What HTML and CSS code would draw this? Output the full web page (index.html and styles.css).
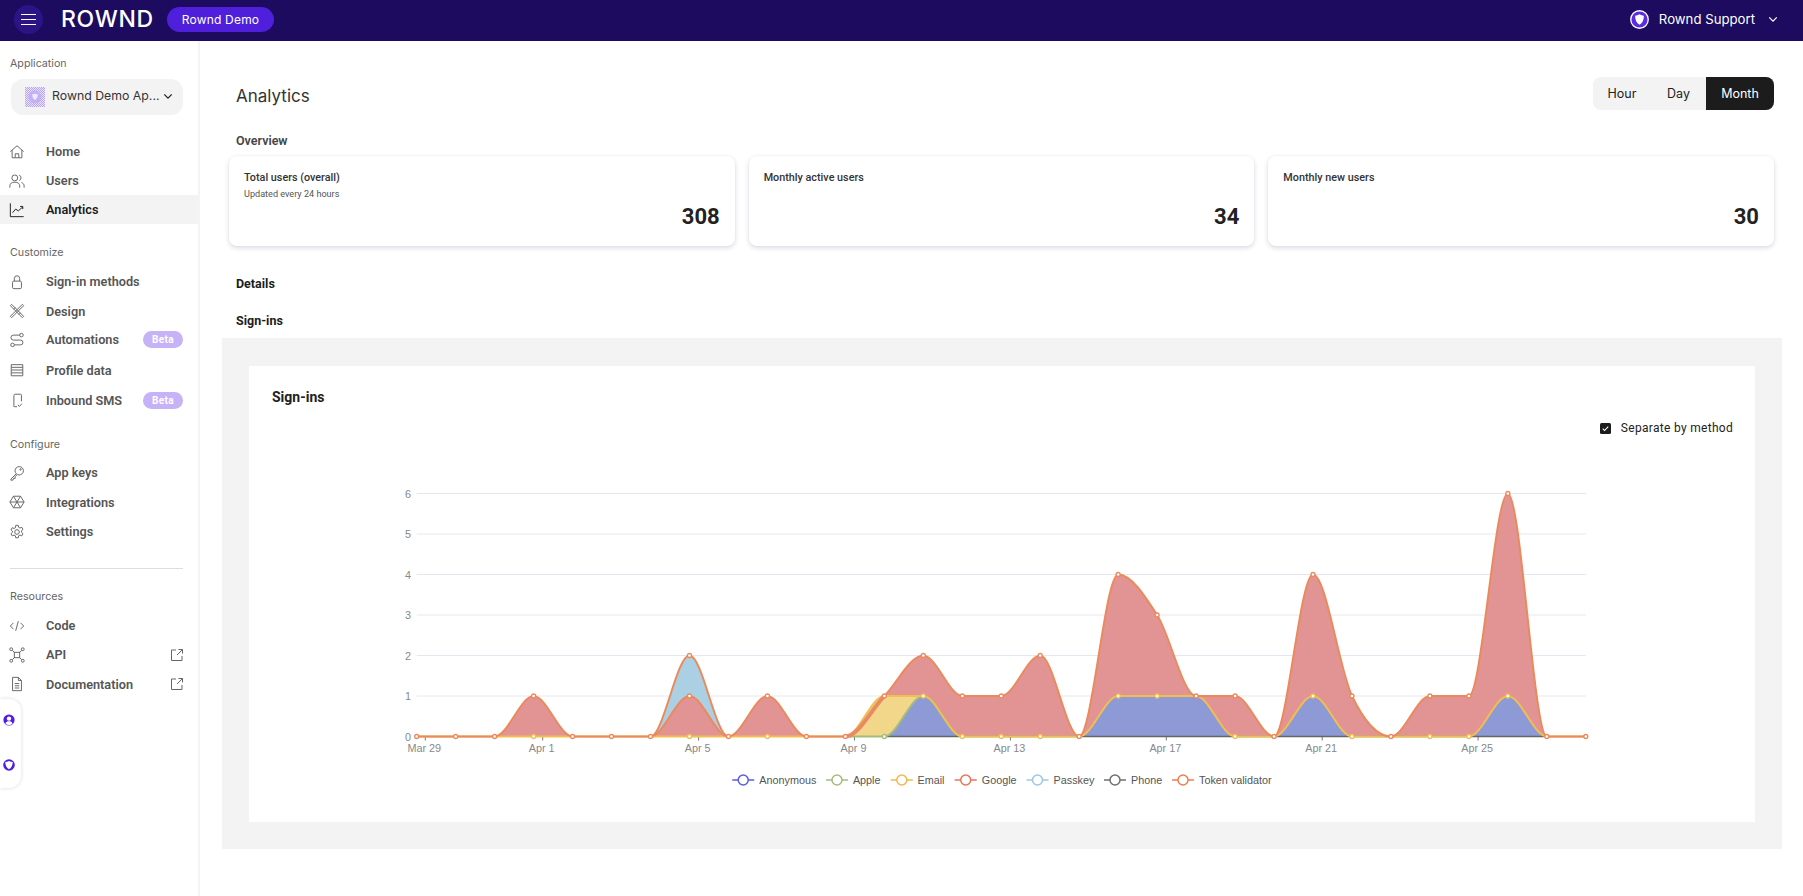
FILE: index.html
```html
<!DOCTYPE html>
<html lang="en">
<head>
<meta charset="utf-8">
<title>Rownd Analytics</title>
<link rel="stylesheet" href="styles.css">
</head>
<body>
<header class="topbar">
  <button class="menu-btn" aria-label="Menu"><span></span><span></span><span></span></button>
  <div class="logo">ROWND</div>
  <div class="env-pill">Rownd Demo</div>
  <div class="account">
    <svg class="account-icon" viewBox="0 0 20 20"><circle cx="10" cy="10" r="9.2" fill="#5a2be0" stroke="#fff" stroke-width="1.4"/><path d="M10 4.600c1.600 1 3 1.400 4.600 1.400 0 4.400-1.400 7.600-4.600 9.600-3.200-2-4.600-5.200-4.600-9.600 1.600 0 3-.4 4.600-1.400z" fill="#fff"/></svg>
    <span>Rownd Support</span>
    <svg class="chev chev-light" viewBox="0 0 12 8"><path d="M1.500 1.500 6 6l4.500-4.500"/></svg>
  </div>
</header>
<div class="shell">
  <aside class="sidebar">
    <div class="nav-label first">Application</div>
    <div class="app-select">
      <svg class="app-icon" viewBox="0 0 20 20">
        <defs><pattern id="px" width="2" height="2" patternUnits="userSpaceOnUse"><rect width="2" height="2" fill="#e9e2fc"/><rect width="1" height="1" fill="#bba6f5"/><rect x="1" y="1" width="1" height="1" fill="#bba6f5"/></pattern></defs>
        <rect width="20" height="20" fill="url(#px)"/><circle cx="10" cy="10" r="6.500" fill="#c3b0f6"/><path d="M10 6.400c.9.600 1.800.8 2.800.8 0 2.600-.9 4.600-2.800 5.800-1.900-1.200-2.800-3.200-2.800-5.800 1 0 1.900-.2 2.800-.8z" fill="#efeafd"/>
      </svg>
      <span class="app-name">Rownd Demo Ap...</span>
      <svg class="chev" viewBox="0 0 12 8"><path d="M1.500 1.500 6 6l4.500-4.500"/></svg>
    </div>
    <nav class="nav-group top">
      <a class="nav-row"><svg class="ico" viewBox="0 0 18 18"><path d="M1.500 8.500 9 2l7.500 6.500M3.500 7v8.500h11V7M7 15.500v-4.500h4v4.500"/></svg><span>Home</span></a>
      <a class="nav-row"><svg class="ico" viewBox="0 0 18 18"><circle cx="6.500" cy="5.500" r="3.300"/><path d="M1 16.500v-2c0-2.500 2-4.200 5.500-4.200s5.500 1.700 5.500 4.200v2M11.500 2.500a3.200 3.200 0 0 1 0 6M14 10.800c2 .6 3 1.900 3 3.700v2"/></svg><span>Users</span></a>
      <a class="nav-row active"><svg class="ico ico-dark" viewBox="0 0 18 18"><path d="M1.500 1.500v15h15M4 12l3.500-4 3 2 5-4.500M12.500 5h3v3"/></svg><span>Analytics</span></a>
    </nav>
    <div class="nav-label">Customize</div>
    <nav class="nav-group">
      <a class="nav-row"><svg class="ico" viewBox="0 0 18 18"><rect x="4" y="8" width="10" height="8.500" rx="1.500"/><path d="M6 8V5a3 3 0 0 1 6 0v3"/></svg><span>Sign-in methods</span></a>
      <a class="nav-row tall"><svg class="ico" viewBox="0 0 18 18"><path d="M3 1.500 16.500 15l-1.500 1.500L1.500 3zM15 1.500 16.500 3 3 16.500 1.500 15zM5 7 7 5M11 13l2-2"/></svg><span>Design</span></a>
      <a class="nav-row short"><svg class="ico" viewBox="0 0 18 18"><circle cx="14" cy="3.500" r="2"/><circle cx="4" cy="14.500" r="2"/><path d="M12 3.500H5a2.800 2.800 0 0 0 0 5.600h8a2.700 2.700 0 0 1 0 5.400H6"/></svg><span>Automations</span><em class="badge">Beta</em></a>
      <a class="nav-row tall"><svg class="ico" viewBox="0 0 18 18"><path d="M2.500 3h13v12.500h-13zM2.500 6h13M2.500 9h13M2.500 12.200h13"/></svg><span>Profile data</span></a>
      <a class="nav-row tall"><svg class="ico" viewBox="0 0 18 18"><path d="M5.500 15.500V4c0-1 .6-1.500 1.500-1.500h6c.7 0 1 .4 1 1v7M5 15.500c0 .5.300 1 1 1h3M10 14.500l1.700 1.700 2.800-3"/></svg><span>Inbound SMS</span><em class="badge">Beta</em></a>
    </nav>
    <div class="nav-label configure">Configure</div>
    <nav class="nav-group">
      <a class="nav-row"><svg class="ico" viewBox="0 0 18 18"><circle cx="11.500" cy="6.500" r="4.700"/><path d="M8 10 2 16v1h2.500l.5-2h2v-2l2-2"/><circle cx="13" cy="5" r=".8"/></svg><span>App keys</span></a>
      <a class="nav-row tall"><svg class="ico" viewBox="0 0 18 18"><path d="M5 2.500h8L17 9l-4 6.500H5L1 9zM1 9h16M5 2.500l8 13M13 2.500l-8 13"/></svg><span>Integrations</span></a>
      <a class="nav-row"><svg class="ico" viewBox="0 0 18 18"><circle cx="9" cy="9" r="2.600"/><path d="M7.600 1.500h2.800l.4 2.200 1.500.8 2.100-.8 1.400 2.400-1.700 1.500v1.800l1.700 1.500-1.400 2.400-2.100-.8-1.500.8-.4 2.200H7.600l-.4-2.200-1.500-.8-2.100.8-1.400-2.400 1.700-1.500V8.100L2.200 6.600l1.400-2.400 2.100.8 1.500-.8z"/></svg><span>Settings</span></a>
    </nav>
    <hr class="nav-divider">
    <div class="nav-label compact">Resources</div>
    <nav class="nav-group">
      <a class="nav-row"><svg class="ico" viewBox="0 0 18 18"><path d="M5 5.500 1.500 9 5 12.500M13 5.500 16.500 9 13 12.500M10.500 3.500l-3 11"/></svg><span>Code</span></a>
      <a class="nav-row"><svg class="ico" viewBox="0 0 18 18"><rect x="6" y="6" width="6" height="6"/><circle cx="2.500" cy="2.500" r="1.600"/><circle cx="15.500" cy="2.500" r="1.600"/><circle cx="2.500" cy="15.500" r="1.600"/><circle cx="15.500" cy="15.500" r="1.600"/><path d="M3.700 3.700 6 6M14.300 3.700 12 6M3.700 14.300 6 12M14.300 14.300 12 12"/></svg><span>API</span><svg class="ext" viewBox="0 0 12 12"><path d="M5 1H.5v10.500H11V7M6 6l5.500-5.500M7.500.5h4v4"/></svg></a>
      <a class="nav-row tall"><svg class="ico" viewBox="0 0 18 18"><path d="M4 1.500h6.500l3.500 3.500v11.500H4zM10.500 1.500V5H14M6.500 8.500h5M6.500 11h5M6.500 13.500h5"/></svg><span>Documentation</span><svg class="ext" viewBox="0 0 12 12"><path d="M5 1H.5v10.500H11V7M6 6l5.500-5.500M7.500.5h4v4"/></svg></a>
    </nav>
  </aside>
  <main class="main">
    <div class="page-head">
      <h1>Analytics</h1>
      <div class="segmented"><span>Hour</span><span class="day">Day</span><span class="on">Month</span></div>
    </div>
    <h2 class="overview">Overview</h2>
    <section class="stats">
      <article class="stat"><div class="stat-title">Total users (overall)</div><div class="stat-sub">Updated every 24 hours</div><div class="stat-num">308</div></article>
      <article class="stat"><div class="stat-title">Monthly active users</div><div class="stat-sub">&nbsp;</div><div class="stat-num">34</div></article>
      <article class="stat"><div class="stat-title">Monthly new users</div><div class="stat-sub">&nbsp;</div><div class="stat-num">30</div></article>
    </section>
    <h2 class="details">Details</h2>
    <h2 class="signins">Sign-ins</h2>
    <section class="panel">
      <div class="chart-card">
        <h3>Sign-ins</h3>
        <label class="check"><span class="box"><svg viewBox="0 0 12 12"><path d="M3 6.200 5 8.200 9 4"/></svg></span>Separate by method</label>
        <svg id="chart" class="chart" viewBox="249 470 1506 330"></svg>
      </div>
    </section>
  </main>
</div>
<aside class="float-widget">
  <svg viewBox="0 0 12 12"><circle cx="6" cy="6" r="5.600" fill="#4f1fdb"/><circle cx="6" cy="4.600" r="2.200" fill="#fff"/><path d="M2.400 9.400c.6-1.600 2-2.200 3.600-2.200s3 .6 3.600 2.200A5 5 0 0 1 6 11a5 5 0 0 1-3.600-1.600z" fill="#fff"/></svg>
  <svg viewBox="0 0 12 12"><circle cx="6" cy="6" r="5.800" fill="#4f1fdb"/><path d="M6 1.900c1.200.7 2.400 1 3.700 1 0 3.400-1.100 5.700-3.700 7.300-2.600-1.600-3.700-3.900-3.700-7.300 1.300 0 2.500-.3 3.700-1z" fill="#fff"/></svg>
</aside>
<script src="chart.js"></script>
</body>
</html>
```
FILE: styles.css
```css
* { box-sizing: border-box; }
html, body { margin: 0; height: 100%; overflow: hidden; background: #fff; }
body { font-family: Roboto, "Liberation Sans", sans-serif; color: #1c1c1c; }

.topbar { height: 41px; background: #1c0b5e; display: flex; align-items: center; padding-left: 14px; color: #fff; }
.menu-btn { width: 29px; height: 29px; border: 0; border-radius: 50%; background: #2d1485; display: flex; flex-direction: column; align-items: center; justify-content: center; gap: 4px; padding: 0; margin-top: -3px; }
.menu-btn span { display: block; width: 15px; height: 1px; background: #fff; }
.logo { font-family: Inter, sans-serif; font-size: 23px; font-weight: 500; letter-spacing: .7px; margin-left: 18px; margin-top: -3px; width: 106px; }
.env-pill { width: 107px; height: 25px; border-radius: 13px; background: #4f1fdb; display: flex; align-items: center; justify-content: center; font-family: Inter, sans-serif; font-size: 12px; letter-spacing: .2px; margin-top: -3px; }
.account { margin-left: auto; display: flex; align-items: center; font-family: Inter, sans-serif; font-size: 13.200px; margin-top: -3px; padding-right: 25px; }
.account-icon { width: 19px; height: 19px; margin-right: 10px; }
.chev { width: 10px; height: 7px; fill: none; stroke: #222; stroke-width: 1.500; }
.chev-light { stroke: #fff; margin-left: 13px; }

.shell { display: flex; height: 855px; }
.sidebar { width: 200px; flex: none; border-right: 2px solid #f4f4f4; }
.nav-label { font-family: Inter, sans-serif; font-size: 10.700px; color: #666; padding-left: 10px; height: 15px; line-height: 15px; margin-bottom: 7px; margin-top: 21px; }
.nav-label.first { margin-top: 15px; margin-bottom: 8px; }
.nav-label.configure { margin-top: 22px; margin-bottom: 6px; }
.nav-label.compact { margin-top: 20px; }
.app-select { margin: 8px 15px 0 11px; height: 36px; border-radius: 12px; background: #f3f3f3; display: flex; align-items: center; padding: 0 10px 0 14px; }
.app-icon { width: 20px; height: 20px; flex: none; }
.app-name { font-family: Inter, sans-serif; font-size: 12.300px; margin: 0 0 3px 7px; white-space: nowrap; flex: 1; color: #333; }
.app-select .chev { margin-bottom: 1px; }
.nav-group { display: flex; flex-direction: column; }
.nav-group.top { margin-top: 22px; }
.nav-row { height: 29px; display: flex; align-items: center; padding: 0 15px 0 9px; font-size: 12.700px; font-weight: 600; color: #555; }
.nav-row.tall { height: 30px; }
.nav-row.short { height: 27px; margin-bottom: 2px; }
.nav-row > span { margin-left: 21px; flex: 1; }
.nav-row.active { background: #f3f3f3; color: #1c1c1c; }
.ico { width: 16px; height: 16px; flex: none; fill: none; stroke: #666; stroke-width: 1.100; }
.ico-dark { stroke: #222; }
.ext { width: 12px; height: 12px; fill: none; stroke: #666; stroke-width: 1; }
.badge { width: 40px; height: 17px; line-height: 17px; border-radius: 9px; background: #c6b2f7; color: #fff; font-style: normal; text-align: center; font-size: 10px; font-weight: 700; letter-spacing: .4px; }
.nav-divider { border: 0; border-top: 1px solid #ddd; margin: 22px 15px 0 10px; }

.main { flex: 1; min-width: 0; padding: 36px 21px 0 22px; }
.page-head { display: flex; justify-content: space-between; align-items: center; padding: 0 8px 0 14px; height: 33px; }
h1 { margin: 0; padding-top: 4px; font-family: Inter, sans-serif; font-size: 17px; font-weight: 400; color: #333; }
.segmented { display: flex; width: 181px; height: 33px; border-radius: 8px; background: #f3f3f3; overflow: hidden; font-family: Inter, sans-serif; font-size: 12.500px; color: #222; }
.segmented span { display: flex; align-items: center; justify-content: center; width: 58px; }
.segmented .day { width: 55px; }
.segmented .on { width: 68px; background: #1c1c1c; color: #fff; }
h2 { margin: 0; padding-left: 14px; font-size: 12.500px; font-weight: 700; line-height: 16px; }
.overview { color: #444; margin-top: 23px; font-weight: 600; }
.details { margin-top: 30px; }
.signins { margin-top: 21px; }
.stats { display: grid; grid-template-columns: repeat(3, 1fr); gap: 14px; margin: 7px 8px 0 7px; }
.stat { height: 90px; border-radius: 8px; background: #fff; box-shadow: 0 2px 5px rgba(40, 40, 80, .16), 0 0 2px rgba(40, 40, 80, .05); padding: 15px 15px; }
.stat-title { font-size: 10.800px; font-weight: 500; color: #333; line-height: 14px; }
.stat-sub { font-size: 9.100px; color: #555; line-height: 12px; margin-top: 3px; }
.stat-num { text-align: right; font-size: 22px; font-weight: 700; line-height: 26px; margin-top: 4px; color: #222; }
.panel { margin-top: 9px; background: #f3f3f3; height: 511px; padding: 28px 27px; }
.chart-card { background: #fff; height: 456px; padding: 22px 22px 0 23px; display: flex; flex-direction: column; }
h3 { margin: 0; font-size: 14px; font-weight: 700; line-height: 18px; color: #222; }
.check { align-self: flex-end; display: flex; align-items: center; font-size: 12px; letter-spacing: .3px; color: #222; margin-top: 13px; height: 18px; }
.box { width: 11px; height: 11px; border-radius: 1.500px; background: #1c1c1c; margin-right: 10px; display: flex; }
.box svg { width: 11px; height: 11px; fill: none; stroke: #fff; stroke-width: 1.200; }
.chart { width: 1506px; height: 330px; margin: 33px 0 0 -23px; flex: none; font-family: "Liberation Sans", Arial, sans-serif; font-size: 10.800px; }
.chart text { fill: #888; }
.chart .legend-text { fill: #555; }
.grid-line { stroke: #e6e6f0; stroke-width: 1; }
.base-line { stroke: #666; stroke-width: 1.500; }
.tick { stroke: #777; stroke-width: 1; }

.float-widget { position: absolute; left: 0; top: 699px; width: 21px; height: 89px; background: #fff; border-radius: 0 12px 12px 0; box-shadow: 0 0 4px rgba(0, 0, 0, .14); display: flex; flex-direction: column; align-items: center; gap: 33px; padding: 15px 4px 0 0; }
.float-widget svg { width: 12px; height: 12px; flex: none; }
```
FILE: chart.js
```js
(function () {
  var svg = document.getElementById('chart');
  var NS = 'http://www.w3.org/2000/svg';
  var x0 = 416.7, dx = 38.97, y0 = 736.5, unit = 40.5, n = 31;
  var ORANGE = '#ea8a5c', YELLOW = '#efbf4f', GREEN = '#a4bd7c';
  function X(i) { return x0 + dx * i; }
  function Y(v) { return y0 - unit * v; }
  function el(name, attrs, text) {
    var e = document.createElementNS(NS, name);
    for (var k in attrs) e.setAttribute(k, attrs[k]);
    if (text) e.textContent = text;
    svg.appendChild(e);
    return e;
  }
  function series(map) {
    var a = [];
    for (var i = 0; i < n; i++) a.push(map[i] || 0);
    return a;
  }
  // monotone cubic, as the chart library draws it
  function curve(v, from, to) {
    var d = [], m = [], i;
    for (i = 0; i < n - 1; i++) d.push(v[i + 1] - v[i]);
    m[0] = d[0]; m[n - 1] = d[n - 2];
    for (i = 1; i < n - 1; i++) m[i] = d[i] * d[i - 1] <= 0 ? 0 : (d[i] + d[i - 1]) / 2;
    for (i = 0; i < n - 1; i++) {
      if (d[i] === 0) { m[i] = 0; m[i + 1] = 0; continue; }
      var a = m[i] / d[i], b = m[i + 1] / d[i], s = a * a + b * b;
      if (s > 9) { var t = 3 / Math.sqrt(s); m[i] = a * t * d[i]; m[i + 1] = b * t * d[i]; }
    }
    var p = 'M' + X(from).toFixed(2) + ' ' + Y(v[from]).toFixed(2);
    for (i = from; i < to; i++) {
      p += 'C' + (X(i) + dx / 3).toFixed(2) + ' ' + Y(v[i] + m[i] / 3).toFixed(2) + ' ' +
        (X(i + 1) - dx / 3).toFixed(2) + ' ' + Y(v[i + 1] - m[i + 1] / 3).toFixed(2) + ' ' +
        X(i + 1).toFixed(2) + ' ' + Y(v[i + 1]).toFixed(2);
    }
    return p;
  }
  function area(v, color) {
    el('path', { d: curve(v, 0, n - 1) + 'L' + X(n - 1) + ' ' + y0 + 'L' + X(0) + ' ' + y0 + 'Z', fill: color });
  }
  function line(v, color, from, to) {
    el('path', { d: curve(v, from === undefined ? 0 : from, to === undefined ? n - 1 : to), fill: 'none', stroke: color, 'stroke-width': 2 });
  }
  function dots(v, color, idx) {
    idx.forEach(function (i) {
      el('circle', { cx: X(i), cy: Y(v[i]), r: 2, fill: '#fff', stroke: color, 'stroke-width': 1.300 });
    });
  }

  var google = series({ 3: 1, 7: 1, 9: 1, 12: 1, 13: 2, 14: 1, 15: 1, 16: 2, 18: 4, 19: 3, 20: 1, 21: 1, 23: 4, 24: 1, 26: 1, 27: 1, 28: 6 });
  var token = google.slice(); token[7] = 2;
  var passkey = series({ 7: 2 });
  var email = series({ 12: 1, 13: 1, 18: 1, 19: 1, 20: 1, 23: 1, 28: 1 });
  var anon = series({ 13: 1, 18: 1, 19: 1, 20: 1, 23: 1, 28: 1 });

  for (var v = 6; v >= 1; v--) {
    el('line', { x1: x0, x2: X(n - 1), y1: Y(v), y2: Y(v), 'class': 'grid-line' });
  }
  for (v = 0; v <= 6; v++) {
    el('text', { x: 411, y: Y(v) + 4, 'text-anchor': 'end' }, String(v));
  }
  [['Mar 29', 425.3], ['Apr 1', 542.7], ['Apr 5', 698.6], ['Apr 9', 854.5], ['Apr 13', 1010.4], ['Apr 17', 1166.3], ['Apr 21', 1322.2], ['Apr 25', 1478.1]].forEach(function (t) {
    el('line', { x1: t[1], x2: t[1], y1: y0, y2: y0 + 4, 'class': 'tick' });
    el('text', { x: t[1] - 1, y: 752, 'text-anchor': 'middle' }, t[0]);
  });

  area(passkey, '#abd0e4');
  area(google, '#e29393');
  area(email, '#f2d78a');
  area(anon, '#8e9ad6');

  el('line', { x1: X(12), x2: X(29), y1: y0, y2: y0, 'class': 'base-line' });
  line(anon, GREEN, 11, 14);
  line(email, YELLOW);
  el('path', { d: curve(google, 11, 12), fill: 'none', stroke: '#e8906a', 'stroke-width': 4 });
  line(google, ORANGE, 0, 11);
  line(google, ORANGE, 11, 30);
  line(token, ORANGE, 6, 8);

  dots(anon, GREEN, [12]);
  dots(email, YELLOW, [3, 7, 9, 14, 15, 16, 21, 24, 26, 27]);
  dots(google, ORANGE, [0, 1, 2, 3, 4, 5, 6, 7, 8, 9, 10, 11, 12, 13, 14, 15, 16, 17, 18, 19, 20, 21, 22, 23, 24, 25, 26, 27, 28, 29, 30]);
  dots(token, ORANGE, [7]);
  dots(email, YELLOW, [13, 18, 19, 23, 28]);

  [['Anonymous', 743.2, 759.3, '#5b5be8'], ['Apple', 837, 852.9, '#a4bd7c'], ['Email', 901.8, 917.5, '#f2b74e'], ['Google', 965.7, 981.8, '#e8745a'], ['Passkey', 1037.5, 1053.6, '#9cc8e8'], ['Phone', 1115, 1131, '#6f6f6f'], ['Token validator', 1183, 1199, '#ee7d50']].forEach(function (l) {
    el('line', { x1: l[1] - 11, x2: l[1] + 11, y1: 780, y2: 780, stroke: l[3], 'stroke-width': 1.500 });
    el('circle', { cx: l[1], cy: 780, r: 5, fill: '#fff', stroke: l[3], 'stroke-width': 1.500 });
    el('text', { x: l[2], y: 784, 'class': 'legend-text' }, l[0]);
  });
})();
```
